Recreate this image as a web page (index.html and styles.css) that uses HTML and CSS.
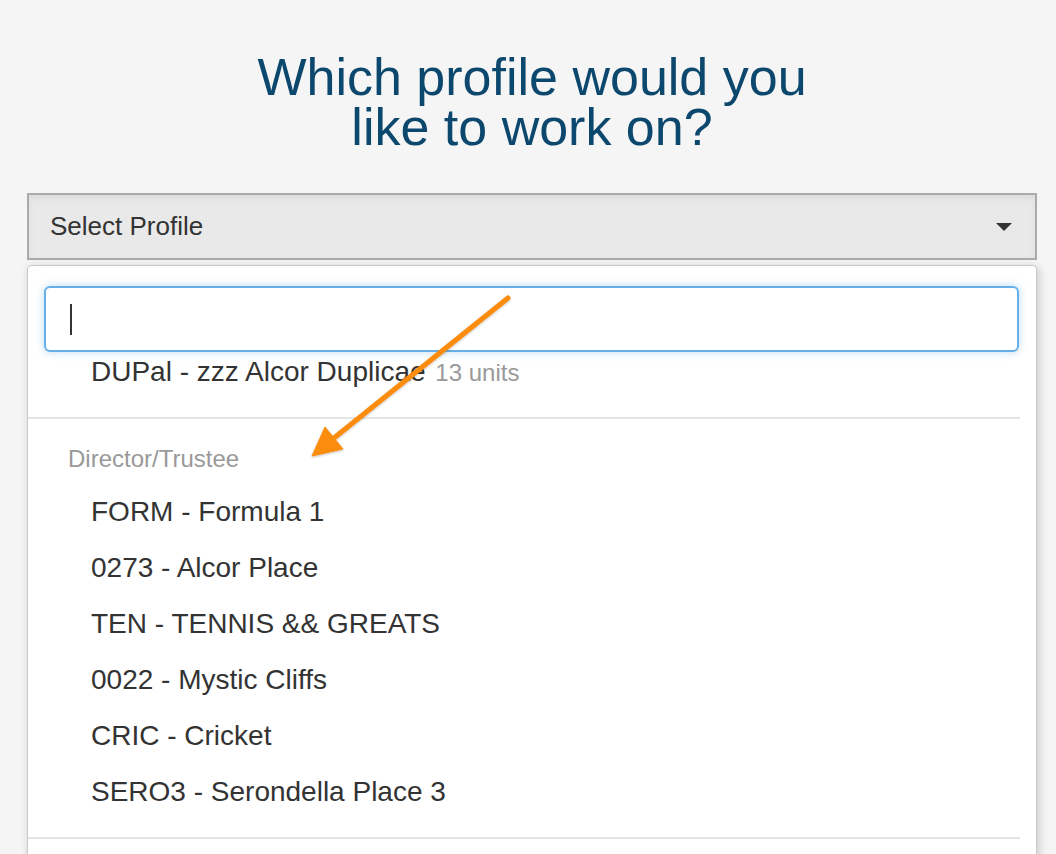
FILE: index.html
```html
<!DOCTYPE html>
<html lang="en">
<head>
<meta charset="utf-8">
<title>Select Profile</title>
<link rel="stylesheet" href="styles.css">
</head>
<body>
<div class="page">
  <h1 class="title"><span class="title-line">Which profile would you</span><span class="title-line">like to work on?</span></h1>
  <div class="select">
    <span class="select-label">Select Profile</span>
    <span class="caret"></span>
  </div>
  <div class="dropdown">
    <div class="search-wrap">
      <div class="search"><span class="cursor"></span></div>
    </div>
    <div class="results">
      <ul class="group group-first">
        <li class="option">DUPal - zzz Alcor Duplicae <span class="units">13 units</span></li>
      </ul>
      <ul class="group">
        <li class="group-label">Director/Trustee</li>
        <li class="option">FORM - Formula 1</li>
        <li class="option">0273 - Alcor Place</li>
        <li class="option">TEN - TENNIS &amp;&amp; GREATS</li>
        <li class="option">0022 - Mystic Cliffs</li>
        <li class="option">CRIC - Cricket</li>
        <li class="option">SERO3 - Serondella Place 3</li>
      </ul>
      <div class="more"></div>
    </div>
  </div>
</div>
<svg class="annotation" width="1056" height="854" viewBox="0 0 1056 854" aria-hidden="true">
  <defs>
    <filter id="sh" x="-20%" y="-20%" width="140%" height="140%">
      <feDropShadow dx="0" dy="1" stdDeviation="1.2" flood-color="#000" flood-opacity="0.25"/>
    </filter>
  </defs>
  <g filter="url(#sh)" fill="#fb8c0e" stroke="#fb8c0e">
    <line x1="508" y1="298" x2="334" y2="438" stroke-width="5" stroke-linecap="round"/>
    <polygon points="312,456 325,427 343,449" stroke-width="1" stroke-linejoin="round"/>
  </g>
</svg>
</body>
</html>
```
FILE: styles.css
```css
html, body {
  margin: 0;
  padding: 0;
  height: 100%;
  overflow: hidden;
}

body {
  background: #f5f5f5;
  font-family: "Liberation Sans", Arial, Helvetica, sans-serif;
  color: #333;
  position: relative;
}

.page {
  padding: 0 19px 0 27px;
}

.title {
  margin: 52px 0 41px;
  font-size: 52px;
  line-height: 50px;
  font-weight: 400;
  text-align: center;
  color: #0c476d;
}

.title-line {
  display: block;
  height: 50px;
}

.select {
  box-sizing: border-box;
  height: 67px;
  border: 2px solid #ababab;
  background: #e9e9e9;
  box-shadow: inset 0 3px 6px rgba(0, 0, 0, 0.06);
  display: flex;
  align-items: center;
  justify-content: space-between;
  padding: 0 23px 0 21px;
  font-size: 26px;
  color: #333;
}

.caret {
  width: 0;
  height: 0;
  border-left: 8px solid transparent;
  border-right: 8px solid transparent;
  border-top: 8px solid #333;
  margin-top: 1px;
}

.dropdown {
  margin-top: 5px;
  background: #fff;
  border: 1px solid #c9c9c9;
  border-bottom: none;
  border-radius: 5px 5px 0 0;
  box-shadow: 2px 2px 10px rgba(0, 0, 0, 0.18);
}

.search-wrap {
  padding: 20px 17px 0 16px;
  position: relative;
  z-index: 1;
}

.search {
  box-sizing: border-box;
  height: 66px;
  border: 2px solid #66afe9;
  border-radius: 6px;
  background: #fff;
  box-shadow: 0 0 9px rgba(102, 175, 233, 0.45);
  display: flex;
  align-items: center;
  padding-left: 24px;
}

.cursor {
  display: block;
  width: 2px;
  height: 31px;
  background: #333;
}

.results {
  margin-right: 16px;
}

.group {
  list-style: none;
  margin: 0;
  padding: 0 0 17px;
  border-bottom: 2px solid #e5e5e5;
}

.group-first {
  padding-bottom: 25px;
}

.option {
  height: 56px;
  line-height: 56px;
  padding-left: 63px;
  font-size: 28px;
  color: #333;
  white-space: nowrap;
}

.group-first .option {
  height: 40px;
  line-height: 40px;
}

.units {
  font-size: 24px;
  color: #999;
  margin-left: 2px;
}

.group-label {
  padding: 20px 0 5px 40px;
  line-height: 40px;
  font-size: 24px;
  color: #999;
}

.more {
  height: 80px;
}

.annotation {
  position: absolute;
  left: 0;
  top: 0;
  z-index: 10;
  pointer-events: none;
}
```
